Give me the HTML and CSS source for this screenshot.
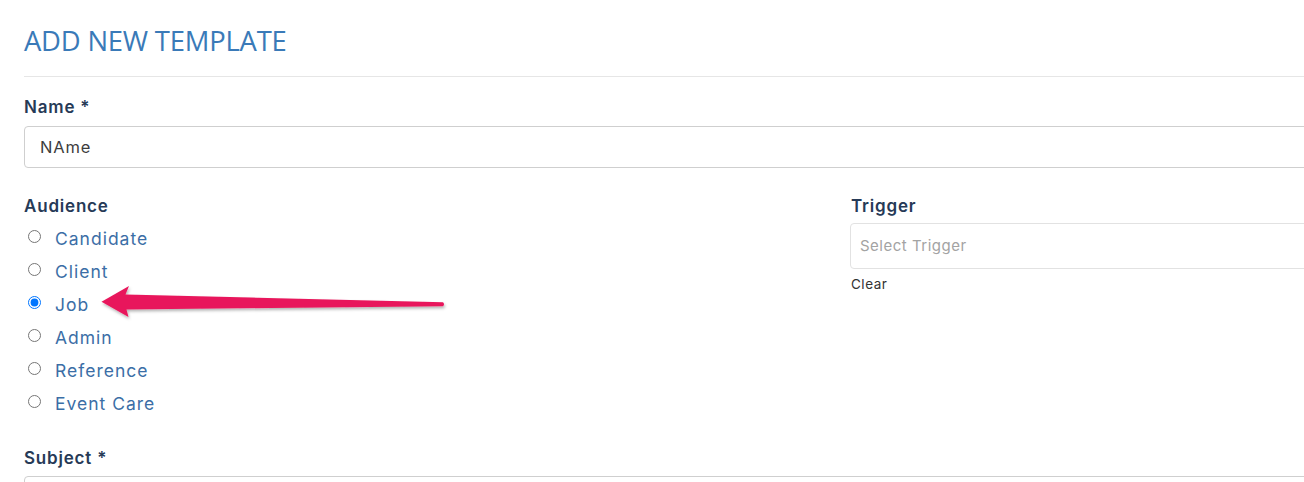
FILE: index.html
```html
<!DOCTYPE html>
<html lang="en">
<head>
<meta charset="utf-8">
<title>Add New Template</title>
<link rel="stylesheet" href="styles.css">
</head>
<body>
<div class="page">
  <h1 class="title">ADD NEW TEMPLATE</h1>
  <hr class="divider">
  <div class="field">
    <label class="label">Name *</label>
    <div class="input name-input">NAme</div>
  </div>
  <div class="row">
    <div class="col">
      <div class="label">Audience</div>
      <ul class="radios">
        <li class="radio"><input type="radio" name="aud"><span>Candidate</span></li>
        <li class="radio"><input type="radio" name="aud"><span>Client</span></li>
        <li class="radio"><input type="radio" name="aud" checked><span>Job</span></li>
        <li class="radio"><input type="radio" name="aud"><span>Admin</span></li>
        <li class="radio"><input type="radio" name="aud"><span>Reference</span></li>
        <li class="radio"><input type="radio" name="aud"><span>Event Care</span></li>
      </ul>
    </div>
    <div class="col">
      <div class="label">Trigger</div>
      <div class="select">Select Trigger</div>
      <div class="clear">Clear</div>
    </div>
  </div>
  <div class="field subject">
    <label class="label">Subject *</label>
    <div class="input"></div>
  </div>
</div>
<svg class="arrow" width="360" height="50" viewBox="95 282 360 50" xmlns="http://www.w3.org/2000/svg">
  <defs>
    <filter id="sh" x="-10%" y="-50%" width="120%" height="200%">
      <feDropShadow dx="1" dy="2" stdDeviation="1.5" flood-color="#000" flood-opacity="0.3"/>
    </filter>
  </defs>
  <path filter="url(#sh)" fill="#e8185c" d="M101.5 301.8 L129 286 L125.5 294.5 L443 302.2 Q445 304.2 443 306.2 L126.5 309.5 L128.5 317 Z"/>
</svg>
</body>
</html>
```
FILE: styles.css
```css
html, body {
  margin: 0;
  padding: 0;
  background: #fff;
  overflow: hidden;
}
body {
  font-family: "Open Sans", "Liberation Sans", sans-serif;
  color: #333;
  position: relative;
  width: 1304px;
  height: 482px;
}
.page {
  width: 1654px;
  padding: 0 24px;
}
.title {
  margin: 0;
  padding-top: 22px;
  font-family: "Open Sans", sans-serif;
  font-weight: 400;
  font-size: 27.4px;
  line-height: 38px;
  color: #3a7ab8;
  letter-spacing: -0.2px;
}
.divider {
  margin: 16px 0 0;
  border: 0;
  border-top: 1px solid #e6e6e6;
}
.label {
  display: block;
  font-family: "Inter", sans-serif;
  font-weight: 600;
  font-size: 17px;
  line-height: 20px;
  color: #263a57;
  letter-spacing: 0.8px;
}
.field { margin-top: 20px; }
.field .label { margin-bottom: 9px; }
.input {
  height: 40px;
  border: 1px solid #cfcfcf;
  border-radius: 4px;
  box-sizing: content-box;
  padding: 0 15px;
  font-family: "Inter", sans-serif;
  font-size: 16.5px;
  line-height: 40px;
  color: #3d3d3d;
  letter-spacing: 0.8px;
}
.row {
  display: grid;
  grid-template-columns: 827px 1fr;
  margin-top: 28px;
}
.radios {
  list-style: none;
  margin: 6px 0 0;
  padding: 0;
}
.radio {
  display: flex;
  align-items: center;
  height: 33px;
}
.radio input {
  margin: 0 0 0 4px;
  width: 13px;
  height: 13px;
  position: relative;
  top: -2px;
}
.radio span {
  margin-left: 14px;
  font-family: "Inter", sans-serif;
  font-size: 17.5px;
  color: #3b6ea6;
  letter-spacing: 1px;
}
.select {
  margin-top: 7px;
  margin-left: -1px;
  height: 44px;
  border: 1px solid #e2e2e2;
  border-radius: 4px;
  padding: 0 9px;
  font-family: "Inter", sans-serif;
  font-size: 15px;
  line-height: 44px;
  color: #a3a3a3;
  letter-spacing: 0.5px;
}
.clear {
  margin-top: 6px;
  font-family: "Inter", sans-serif;
  font-size: 13.5px;
  line-height: 18px;
  color: #333;
  letter-spacing: 0.5px;
}
.subject { margin-top: 28px; }
.subject .label { margin-bottom: 8px; }
.arrow {
  position: absolute;
  left: 95px;
  top: 282px;
  overflow: visible;
}
```
